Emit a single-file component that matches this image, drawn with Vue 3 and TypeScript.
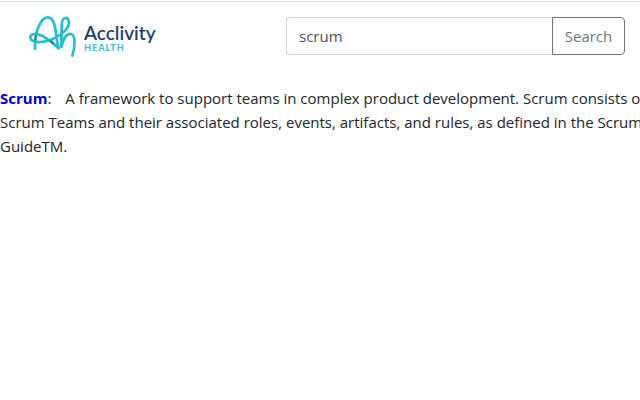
<script setup lang="ts">
import { ref } from 'vue'

const query = ref('scrum')
const term = 'Scrum'
const lines = [
  'A framework to support teams in complex product development. Scrum consists of',
  'Scrum Teams and their associated roles, events, artifacts, and rules, as defined in the Scrum',
  'GuideTM.',
]
</script>

<template>
  <div class="page">
    <header class="bar">
      <a class="brand" href="#" aria-label="Acclivity Health">
        <svg class="logo" viewBox="0 0 134 52" role="img" aria-hidden="true">
          <g transform="scale(0.33333)" fill="none" stroke="#27bccf" stroke-width="8" stroke-linecap="round" stroke-linejoin="round">
            <path d="M27 116 C26 70 42 22 66 22 C92 22 88 84 98 115 C84 102 68 88 50 78 C32 69 13 70 13 82 C14 97 38 98 58 94 C92 86 128 62 129 38 C129 18 108 18 107 46 L106 111 C111 86 122 70 135 72 C151 77 146 116 139 137" />
            <path d="M28 90 L29 78 M74 93 L82 99" stroke="#1488a7" stroke-width="6" />
          </g>
          <text class="logo-name" x="58" y="30">Acclivity</text>
          <text class="logo-sub" x="58" y="41">HEALTH</text>
        </svg>
      </a>
      <form class="search" role="search" @submit.prevent>
        <input v-model="query" class="field" type="text" aria-label="Search term" />
        <button class="submit" type="submit">Search</button>
      </form>
    </header>
    <main class="result">
      <b class="term">{{ term }}</b>:<span class="gap"></span><template v-for="(line, i) in lines" :key="i"><br v-if="i > 0" />{{ line }}</template>
    </main>
  </div>
</template>

<style>
body {
  background: #fff;
}
</style>

<style scoped>
.page {
  overflow: hidden;
  border-top: 1px solid #fff;
  color: #212529;
  font: 15px/24px "Open Sans", "Noto Sans", sans-serif;
}
.bar {
  display: flex;
  align-items: flex-start;
  justify-content: space-between;
  padding: 0 15px 24px 26px;
  border-top: 1px solid #d9dcdf;
}
.brand {
  display: block;
  padding-top: 8px;
}
.logo {
  display: block;
  width: 134px;
  height: 52px;
}
.logo-name {
  fill: #1c3f6e;
  font: 600 19px Lato, sans-serif;
}
.logo-sub {
  fill: #3cc3d2;
  font: 900 9px Lato, sans-serif;
  letter-spacing: 1px;
}
.search {
  display: flex;
  width: 339px;
  height: 38px;
  margin-top: 15px;
}
.field {
  flex: 1;
  min-width: 0;
  padding: 0 12px;
  border: 1px solid #ced4da;
  border-right: 0;
  border-radius: 4px 0 0 4px;
  background: #fff;
  color: #495057;
  font: inherit;
  outline: 0;
}
.submit {
  width: 73px;
  padding: 0;
  border: 1px solid #6c757d;
  border-radius: 0 4px 4px 0;
  background: #fff;
  color: #6c757d;
  font: inherit;
}
.result {
  white-space: nowrap;
}
.term {
  color: #0000cd;
}
.gap {
  display: inline-block;
  width: 14px;
}
</style>
